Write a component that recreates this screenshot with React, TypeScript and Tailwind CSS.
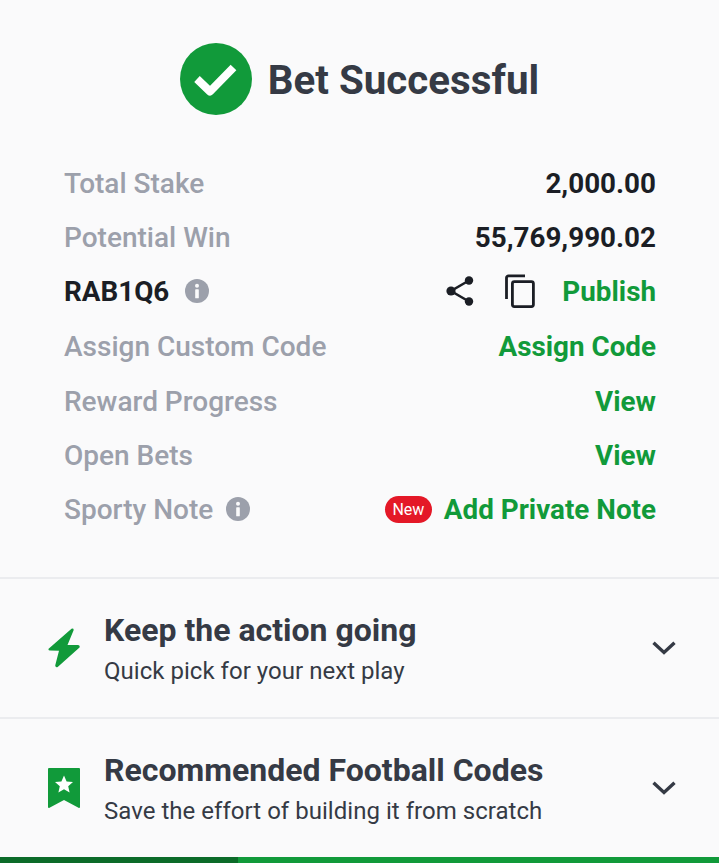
const G = "text-[#119a3a]";

function Info({ className = "" }: { className?: string }) {
  return (
    <svg viewBox="0 0 24 24" className={className} fill="#9ca0ab">
      <circle cx="12" cy="12" r="12" />
      <circle cx="12" cy="6.8" r="2" fill="#fafafb" />
      <rect x="10.2" y="10.3" width="3.6" height="9" rx="0.6" fill="#fafafb" />
    </svg>
  );
}

function Chevron() {
  return (
    <svg viewBox="0 0 24 14" className="w-6 h-[14px]" fill="none" stroke="#353a45" strokeWidth="3.4">
      <path d="M1.5 1.8 L12 11.5 L22.5 1.8" />
    </svg>
  );
}

function Row({ label, children, h }: { label: React.ReactNode; children: React.ReactNode; h: string }) {
  return (
    <div className={`flex items-center justify-between ${h}`}>
      <div className="flex items-center">{label}</div>
      <div className="flex items-center">{children}</div>
    </div>
  );
}

const L = "text-[#9ca0ab]";
const B = "font-bold text-[27.8px]";

function Section({ icon, title, sub, h }: { icon: React.ReactNode; title: string; sub: string; h: string }) {
  return (
    <div className={`flex items-center border-t-2 border-[#ebecef] pl-[48px] pr-[43px] ${h}`}>
      <div className="w-[32px] flex justify-center shrink-0">{icon}</div>
      <div className="ml-[24px] flex-1 pt-[2px]">
        <div className="text-[32px] leading-[38px] font-bold text-[#353a45]">{title}</div>
        <div className="text-[24px] leading-[32px] mt-[6px] font-normal tracking-[0.03px] text-[#353a45]">{sub}</div>
      </div>
      <Chevron />
    </div>
  );
}

export default function App() {
  return (
    <div className="w-[719px] h-[863px] bg-[#fafafb] flex flex-col overflow-hidden font-['Roboto',sans-serif] text-[28px] font-medium">
      <div className="h-[577px] shrink-0 flex flex-col">
        <div className="flex items-start justify-center pt-[43px] h-[146px]">
          <svg viewBox="0 0 72 72" className="w-[72px] h-[72px] shrink-0">
            <circle cx="36" cy="36" r="36" fill="#119a3a" />
            <path d="M17 36 L30 48.5 L53.5 24.5" fill="none" stroke="#fff" strokeWidth="8" strokeLinejoin="round" />
          </svg>
          <div className="ml-[16px] text-[40.3px] leading-[76px] font-bold text-[#353a45]">Bet Successful</div>
        </div>
        <div className="pl-[64px] pr-[63px] mt-[11px]">
          <Row h="h-[54px]" label={<span className={L}>Total Stake</span>}>
            <span className={`${B} text-[#1b1e25]`}>2,000.00</span>
          </Row>
          <Row h="h-[54px]" label={<span className={L}>Potential Win</span>}>
            <span className={`${B} text-[#1b1e25]`}>55,769,990.02</span>
          </Row>
          <Row
            h="h-[54px]"
            label={
              <>
                <span className={`${B} text-[#1b1e25]`}>RAB1Q6</span>
                <Info className="w-6 h-6 ml-[16px] -mt-[2px]" />
              </>
            }
          >
            <svg viewBox="0 0 30 32" className="w-[30px] h-[32px] -mt-[2px]" fill="#1b1e25" stroke="#1b1e25">
              <circle cx="24" cy="5.5" r="4.2" strokeWidth="0" />
              <circle cx="24" cy="26.5" r="4.2" strokeWidth="0" />
              <circle cx="6" cy="16" r="4.6" strokeWidth="0" />
              <path d="M24 5.5 L6 16 L24 26.5" fill="none" strokeWidth="2.6" />
            </svg>
            <svg viewBox="0 0 30 34" className="w-[30px] h-[34px] ml-[30px] -mt-[2px]" fill="none" stroke="#1b1e25" strokeWidth="2.8">
              <path d="M20 1.8 H3.5 A2 2 0 0 0 1.5 3.8 V25" />
              <rect x="7.4" y="7.6" width="21" height="25" rx="2" />
            </svg>
            <span className={`${B} ${G} ml-[27px]`}>Publish</span>
          </Row>
          <Row h="h-[55px]" label={<span className={L}>Assign Custom Code</span>}>
            <span className={`${B} ${G}`}>Assign Code</span>
          </Row>
          <Row h="h-[55px]" label={<span className={L}>Reward Progress</span>}>
            <span className={`${B} ${G}`}>View</span>
          </Row>
          <Row h="h-[54px]" label={<span className={L}>Open Bets</span>}>
            <span className={`${B} ${G}`}>View</span>
          </Row>
          <Row
            h="h-[54px]"
            label={
              <>
                <span className={L}>Sporty Note</span>
                <Info className="w-6 h-6 ml-[13px] -mt-[2px]" />
              </>
            }
          >
            <span className="bg-[#e41827] text-white text-[16px] leading-[27px] h-[27px] w-[47px] -mt-[2px] rounded-[14px] text-center font-normal">New</span>
            <span className={`${B} ${G} ml-[12px]`}>Add Private Note</span>
          </Row>
        </div>
      </div>
      <Section
        h="h-[140px]"
        title="Keep the action going"
        sub="Quick pick for your next play"
        icon={
          <svg viewBox="0 0 32 40" className="w-[32px] h-[40px]" fill="#119a3a">
            <path d="M23.5 0.8 L0.6 20.8 Q0 22.5 2 22.5 L11 22.7 L7.2 37.5 Q7.5 40 9.7 39 L31.5 19.5 Q32.3 17.2 30 17 L19.5 17 L25.7 2 Q25.5 0 23.5 0.8 Z" />
          </svg>
        }
      />
      <Section
        h="h-[140px]"
        title="Recommended Football Codes"
        sub="Save the effort of building it from scratch"
        icon={
          <svg viewBox="0 0 32 40" className="w-[32px] h-[40px]" fill="#119a3a">
            <path d="M1 0 H31 A1 1 0 0 1 32 1 V39 A1 1 0 0 1 30.5 39.7 L16 32 L1.5 39.7 A1 1 0 0 1 0 39 V1 A1 1 0 0 1 1 0 Z" />
            <path d="M16 7.5 L18.6 13.4 L25 14 L20.2 18.2 L21.6 24.5 L16 21.2 L10.4 24.5 L11.8 18.2 L7 14 L13.4 13.4 Z" fill="#fff" />
          </svg>
        }
      />
      <div className="flex h-[6px] mt-auto shrink-0">
        <div className="w-[238px] bg-[#0c6b29]" />
        <div className="flex-1 bg-[#119a3a]" />
      </div>
    </div>
  );
}
